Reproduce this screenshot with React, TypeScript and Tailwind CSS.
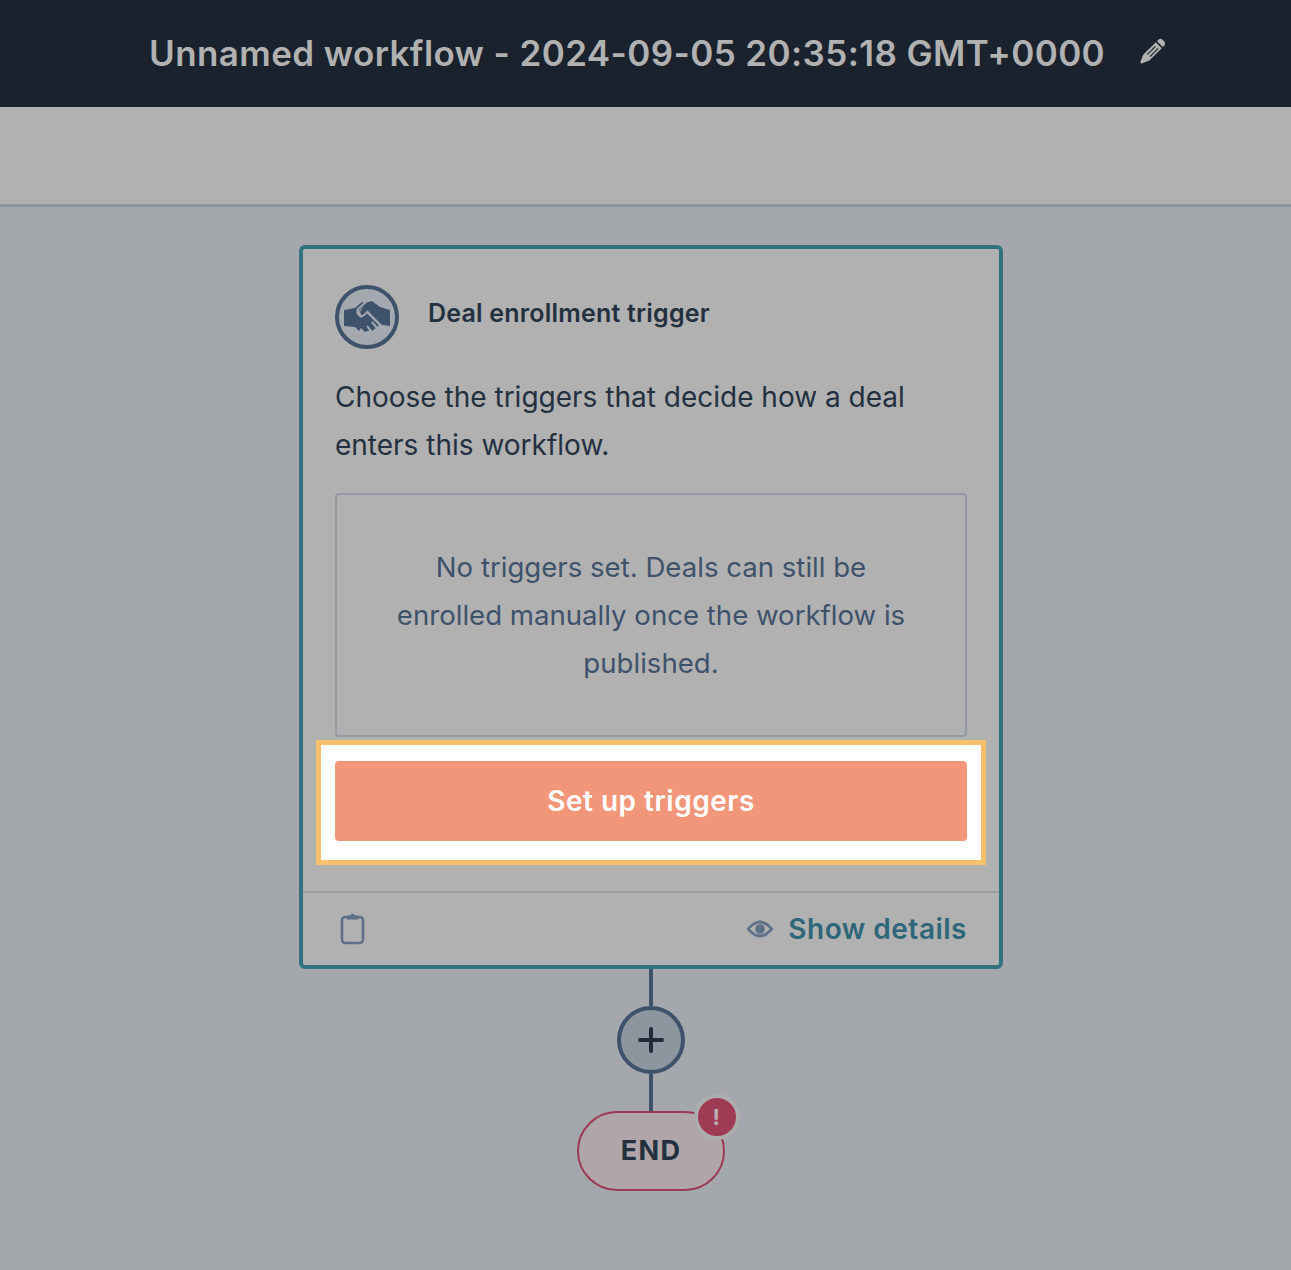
import React from "react";

const font = { fontFamily: '"Inter", "Noto Sans", sans-serif' };

function Handshake() {
  return (
    <svg width="64" height="64" viewBox="0 0 64 64">
      <circle cx="32" cy="32" r="30" fill="#a4a9b0" stroke="#3e526b" strokeWidth="4" />
      <path d="M9 25 L20 23 L27 17 L31 18 L23 27 L26 33 L32 27 L45 39 L42 42 L38 39 L41 43 L37 46 L33 41 L35 45 L30 47 L26 43 L24 46 L20 42 L9 41 Z" fill="#3e526b" />
      <path d="M30 18 L37 16 L45 22 L55 25 L55 41 L47 40 L33 26 L27 32 L25 27 Z" fill="#3e526b" />
      <path d="M32 16 L23 24 Q21 28 25 31 Q28 32 32 27 L46 41" fill="none" stroke="#a4a9b0" strokeWidth="2" />
      <path d="M37 37 L42 43 M32 41 L36 46" fill="none" stroke="#a4a9b0" strokeWidth="2" />
    </svg>
  );
}

function Pencil() {
  return (
    <svg width="26" height="26" viewBox="0 0 26 26" fill="#b1b1b1">
      <path d="M18.6 1.6 Q20.4 0.2 22.2 1.4 L24.6 3.8 Q25.8 5.6 24.4 7.4 L22.8 9 L17 3.2 Z" />
      <path d="M15.8 4.2 L21.8 10.2 L9.4 22.6 L1.6 25.4 Q0.2 25.4 0.4 24 L3.2 16.8 Z M15 8 L6.8 16.2 L7.6 17 L15.8 8.8 Z M17.8 10 L9.6 18.2 L10.4 19 L18.6 10.8 Z" fillRule="evenodd" />
    </svg>
  );
}

export default function App() {
  return (
    <div className="flex h-[1270px] flex-col overflow-hidden bg-[#a4a7ab]" style={font}>
      <header className="flex h-[107px] shrink-0 items-center gap-[35px] bg-[#19222d] pl-[149px]">
        <h1 className="text-[35px] leading-none font-semibold tracking-[0.4px] whitespace-nowrap text-[#b1b1b1]">
          Unnamed workflow - 2024-09-05 20:35:18 GMT+0000
        </h1>
        <span className="relative top-[-3px]">
          <Pencil />
        </span>
      </header>
      <div className="h-[100px] shrink-0 border-b-[3px] border-[#8f949c] bg-[#b1b1b1]" />

      <main className="flex flex-col items-center pt-[38px] pl-[11px]">
        <section className="w-[704px] rounded-[6px] border-[4px] border-[#33727f] bg-[#b1b1b1]">
          <div className="px-[32px] pt-[36px]">
            <div className="flex items-center gap-[29px]">
              <Handshake />
              <h2 className="relative top-[-3px] text-[25px] font-semibold tracking-[0.2px] text-[#233040]">Deal enrollment trigger</h2>
            </div>
            <p className="mt-[24px] text-[28px] leading-[48px] text-[#233040]">
              Choose the triggers that decide how a deal
              <br />
              enters this workflow.
            </p>
            <div className="mt-[24px] flex h-[244px] flex-col rounded-[4px] border-2 border-[#939aa4] pt-[48px] text-center text-[27.6px] leading-[48px] text-[#3e526b]">
              No triggers set. Deals can still be
              <br />
              enrolled manually once the workflow is
              <br />
              published.
            </div>
            <div className="-mx-[19px] mt-[3px] h-[125px] border-[5px] border-[#f5c26b] bg-white px-[14px] pt-[16px]">
              <button className="flex h-[80px] w-full items-center justify-center rounded-[4px] bg-[#f2967a] text-[28px] font-semibold tracking-[0.5px] text-white">
                Set up triggers
              </button>
            </div>
          </div>
          <div className="mt-[26px] flex h-[74px] items-center justify-between border-t-2 border-[#9a9da4] pr-[32px] pl-[31px]">
            <svg width="36" height="36" viewBox="0 0 36 36" fill="none" stroke="#5f6f87" strokeWidth="2.6" className="relative top-[-1px]">
              <rect x="8" y="7" width="21" height="26" rx="3.5" />
              <path d="M13 6 h3 q2.5 -4 5 0 h3 v3 h-11 z" fill="#5f6f87" strokeWidth="1" />
            </svg>
            <div className="flex items-center gap-[14px]">
              <svg width="28" height="20" viewBox="0 0 28 20">
                <path d="M0.5 10 Q14 -7 27.5 10 Q14 27 0.5 10 Z M4 10 Q14 21 24 10 Q14 -1 4 10 Z" fill="#5f6f87" fillRule="evenodd" />
                <circle cx="14" cy="10" r="4.8" fill="#5f6f87" />
              </svg>
              <span className="text-[28px] font-semibold tracking-[0.5px] text-[#2e6779]">Show details</span>
            </div>
          </div>
        </section>

        <div className="h-[37px] w-[4px] bg-[#3e526b]" />
        <button className="flex h-[68px] w-[68px] items-center justify-center rounded-full border-[4px] border-[#3e526b] bg-[#8d959f]">
          <svg width="28" height="28" viewBox="0 0 28 28" stroke="#1f2b3a" strokeWidth="4" strokeLinecap="round">
            <path d="M14 3 V25 M3 14 H25" />
          </svg>
        </button>
        <div className="h-[37px] w-[4px] bg-[#3e526b]" />
        <div className="relative flex h-[80px] w-[148px] items-center justify-center rounded-[40px] border-2 border-[#9b3a52] bg-[#b0a6a9] text-[27px] font-bold tracking-[1.4px] text-[#233040]">
          END
          <span className="absolute -top-[19px] -right-[17px] flex h-[46px] w-[46px] items-center justify-center rounded-full border-[4px] border-[#adadad] bg-[#a03b55] text-[22px] font-bold text-[#b9b1b3]">
            !
          </span>
        </div>
      </main>
    </div>
  );
}
